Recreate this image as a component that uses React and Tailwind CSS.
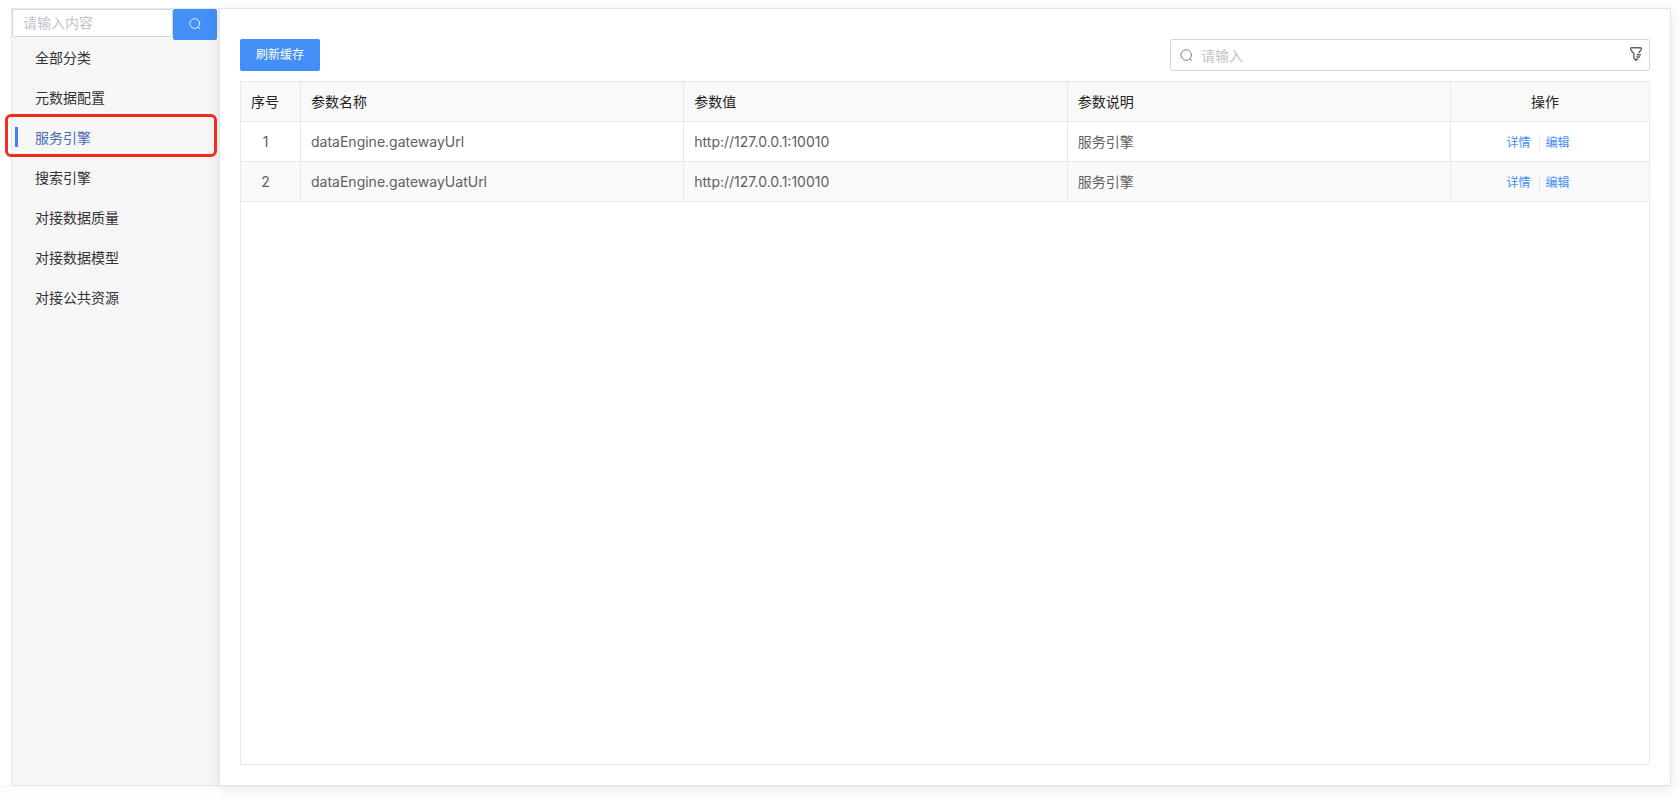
import { useState } from 'react'

const CATEGORIES = [
  '全部分类',
  '元数据配置',
  '服务引擎',
  '搜索引擎',
  '对接数据质量',
  '对接数据模型',
  '对接公共资源',
]

const ROWS = [
  { name: 'dataEngine.gatewayUrl', value: 'http://127.0.0.1:10010', desc: '服务引擎' },
  { name: 'dataEngine.gatewayUatUrl', value: 'http://127.0.0.1:10010', desc: '服务引擎' },
]

function SearchIcon({ className }) {
  return (
    <svg viewBox="0 0 14 14" fill="none" stroke="currentColor" strokeLinecap="round" className={className}>
      <circle cx="6.7" cy="6.5" r="5.7" />
      <path d="M10.8 10.6l1.9 1.8" />
    </svg>
  )
}

function FilterIcon({ className }) {
  return (
    <svg
      viewBox="0 0 14 16"
      fill="none"
      stroke="currentColor"
      strokeWidth="1.4"
      strokeLinecap="round"
      strokeLinejoin="round"
      className={className}
    >
      <path d="M9.800 6.600l2.300-2.900c.5-.8.3-2-.8-2H2.600c-1.100 0-1.300 1.200-.8 2L4.800 7.600v4.400l2 2.300 1.200-.6" />
      <path d="M8.400 8.700h3.200M7.800 11h2.800M7.400 13.200h1.400" />
    </svg>
  )
}

function Sidebar() {
  const [active, setActive] = useState('服务引擎')

  return (
    <aside className="w-52 shrink-0 border border-r-0 border-[#e6e9f2] bg-[#f6f6f6]">
      <div className="flex h-[29px] items-start pr-0.5">
        <input
          type="text"
          aria-label="搜索分类"
          placeholder="请输入内容"
          className="h-7 min-w-0 flex-1 rounded-xs border border-[#d4d6d9] bg-white px-2.5 pb-0.5 text-sm text-[#333] outline-none placeholder:text-[#bfc2ca]"
        />
        <button
          type="button"
          aria-label="搜索"
          className="flex h-[31px] w-11 items-center justify-center rounded-xs bg-[#448ef7] pb-0.5 text-white"
        >
          <SearchIcon className="size-3" />
        </button>
      </div>

      <ul>
        {CATEGORIES.map(item => (
          <li key={item} className="relative">
            <button
              type="button"
              onClick={() => setActive(item)}
              className={`flex h-10 w-full items-center pl-[23px] text-left text-sm ${
                item === active ? 'text-[#4a6cb3]' : 'text-[#333]'
              }`}
            >
              {item}
            </button>
            {item === active && (
              <>
                <span className="pointer-events-none absolute top-[9px] left-[3px] h-5 w-[3px] bg-[#4480f5]" />
                <span className="pointer-events-none absolute -top-1 -left-[7px] right-0.5 z-20 h-[43px] rounded-md border-[3px] border-[#ee2f1a]" />
              </>
            )}
          </li>
        ))}
      </ul>
    </aside>
  )
}

function Toolbar() {
  return (
    <div className="flex items-center justify-between">
      <button type="button" className="h-8 w-20 rounded-xs bg-[#448ef7] text-xs text-white">
        刷新缓存
      </button>
      <div className="flex h-8 w-[480px] items-center rounded-xs border border-[#d4d6d9] pr-1.5 pl-[9px]">
        <SearchIcon className="size-[13px] shrink-0 text-[#777]" />
        <input
          type="text"
          aria-label="搜索参数"
          placeholder="请输入"
          className="h-full min-w-0 flex-1 px-2 text-sm text-[#333] outline-none placeholder:text-[#bfc2ca]"
        />
        <button type="button" aria-label="筛选" className="shrink-0 pb-0.5 text-[#606266]">
          <FilterIcon className="h-4 w-3.5" />
        </button>
      </div>
    </div>
  )
}

function ParamTable() {
  return (
    <div className="mt-2.5 flex-1 border border-[#e7e9f1]">
      <table className="w-full table-fixed border-separate border-spacing-0 text-sm text-[#606060]">
        <colgroup>
          <col className="w-[60px]" />
          <col />
          <col />
          <col />
          <col className="w-[198px]" />
        </colgroup>
        <thead>
          <tr className="h-10 bg-[#f9f9f9] text-left text-[#222] *:border-b *:border-[#e7e9f1] *:p-0 *:font-normal">
            <th className="border-r">
              <div className="px-2.5">序号</div>
            </th>
            <th className="border-r">
              <div className="px-2.5">参数名称</div>
            </th>
            <th className="border-r">
              <div className="px-2.5">参数值</div>
            </th>
            <th className="border-r">
              <div className="px-2.5">参数说明</div>
            </th>
            <th>
              <div className="pr-2.5 text-center">操作</div>
            </th>
          </tr>
        </thead>
        <tbody>
          {ROWS.map((row, i) => (
            <tr key={row.name} className="h-10 even:bg-[#f9f9f9] *:border-b *:border-[#e7e9f1] *:p-0">
              <td className="border-r">
                <div className="pr-2.5 text-center">{i + 1}</div>
              </td>
              <td className="border-r">
                <div className="px-2.5">{row.name}</div>
              </td>
              <td className="border-r">
                <div className="px-2.5">{row.value}</div>
              </td>
              <td className="border-r">
                <div className="px-2.5">{row.desc}</div>
              </td>
              <td>
                <div className="flex items-center justify-center pt-0.5 pr-6 text-xs text-[#448ef7]">
                  <a href="#detail">详情</a>
                  <span className="mr-1.5 ml-2 h-[18px] w-px bg-[#e7e9f1]" />
                  <a href="#edit">编辑</a>
                </div>
              </td>
            </tr>
          ))}
        </tbody>
      </table>
    </div>
  )
}

export default function App() {
  return (
    <div className="flex h-screen flex-col overflow-hidden bg-white font-[Inter,'Noto_Sans_CJK_SC',sans-serif]">
      <div className="flex min-h-0 flex-1 pt-2 pr-[9px] pl-[11px]">
        <Sidebar />
        <main className="relative z-10 flex min-w-0 flex-1 flex-col border border-[#e2e5ef] bg-white px-5 pt-[30px] pb-5 shadow-[0_2px_12px_rgba(0,0,0,0.1)]">
          <Toolbar />
          <ParamTable />
        </main>
      </div>
      <footer className="h-3.5 border-t border-[#f5f7fd] bg-[#fefefe]" />
    </div>
  )
}
